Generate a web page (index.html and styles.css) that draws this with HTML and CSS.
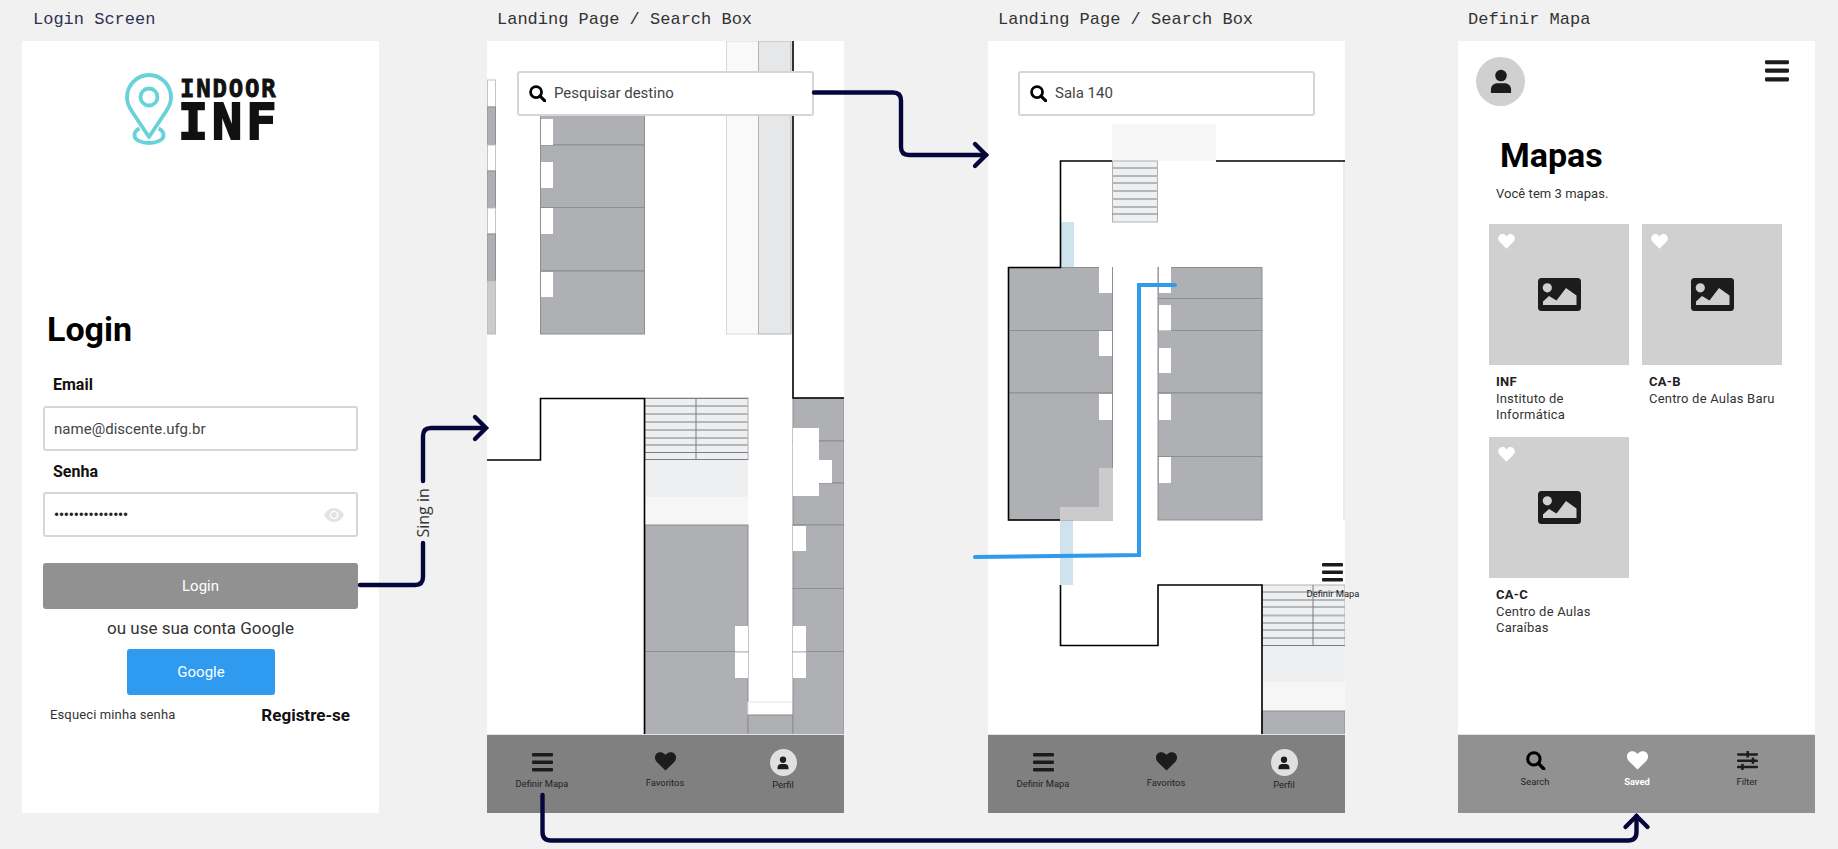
FILE: index.html
```html
<!DOCTYPE html>
<html lang="pt-BR">
<head>
<meta charset="utf-8">
<title>Indoor INF</title>
<link rel="stylesheet" href="styles.css">
</head>
<body>
<svg class="defs" width="0" height="0" aria-hidden="true">
  <symbol id="i-menu" viewBox="0 0 21 19"><rect x="0" y="0" width="21" height="3.6" rx="1"/><rect x="0" y="7.4" width="21" height="3.6" rx="1"/><rect x="0" y="15" width="21" height="3.6" rx="1"/></symbol>
  <symbol id="i-heart" viewBox="0 0 21 19"><path d="M10.5 18.6 2 10.2C-.7 7.4-.6 3.6 1.6 1.6 3.9-.5 7.4-.2 9.3 1.8l1.2 1.3 1.2-1.3c1.9-2 5.4-2.3 7.7-.2 2.2 2 2.3 5.8-.4 8.6z"/></symbol>
  <symbol id="i-person" viewBox="0 0 24 26"><circle cx="12" cy="6.5" r="6.3"/><path d="M1 25.5v-3.6C1 17.6 4.4 15 8 15h8c3.6 0 7 2.6 7 6.9v3.6z"/></symbol>
  <symbol id="i-search" viewBox="0 0 20 20"><circle cx="8.3" cy="8.3" r="6.5" fill="none" stroke="currentColor" stroke-width="3.2"/><path d="M13 13l5.6 5.6" fill="none" stroke="currentColor" stroke-width="3.6" stroke-linecap="round"/></symbol>
  <symbol id="i-image" viewBox="0 0 43 33"><rect width="43" height="33" rx="3.5" fill="#1c1c1c"/><circle cx="9.3" cy="9.8" r="4.6" fill="#d0d0d0"/><path d="M5 27v-3.5l6-5.5 7.5 4.5L28 10l10.500 7.500V27z" fill="#d0d0d0"/></symbol>
  <symbol id="i-filter" viewBox="0 0 20 18"><rect y="2" width="20" height="2.4" rx="1"/><rect x="9" y="0" width="2.400" height="6.200"/><rect y="8" width="20" height="2.400" rx="1"/><rect x="14" y="6.200" width="2.400" height="6"/><rect y="14" width="20" height="2.400" rx="1"/><rect x="4" y="12.200" width="2.400" height="5.800"/></symbol>
</svg>

<main class="board">

  <section class="artboard artboard-login">
    <h2 class="board-title board-title-blue">Login Screen</h2>
    <div class="frame frame-login">
      <div class="logo">
        <svg class="logo-pin" viewBox="0 0 48 72" aria-hidden="true">
          <path d="M24 64 7 38.500C4 34 2 29.500 2 24.500 2 12.200 11.800 2 24 2s22 10.200 22 22.500c0 5-2 9.500-5 14z" fill="none" stroke="#67d3d8" stroke-width="3.800" stroke-linejoin="round"/>
          <circle cx="24" cy="24" r="8.500" fill="none" stroke="#67d3d8" stroke-width="3.800"/>
          <path d="M14.500 55.500C11 57 9.500 59.800 9.500 62.500c0 4.300 6.500 7.500 14.500 7.500s14.500-3.200 14.500-7.500c0-2.700-1.500-5.500-5-7" fill="none" stroke="#67d3d8" stroke-width="3.800"/>
        </svg>
        <div class="logo-words">
          <span class="logo-top">INDOOR</span>
          <span class="logo-bottom">INF</span>
        </div>
      </div>
      <h1 class="login-title">Login</h1>
      <label class="field-label">Email</label>
      <div class="input">name@discente.ufg.br</div>
      <label class="field-label field-label-second">Senha</label>
      <div class="input input-password">
        <span class="dots">•••••••••••••••</span>
        <svg class="eye" viewBox="0 0 20 14" aria-hidden="true"><path d="M10 0C5.500 0 2 3 0 7c2 4 5.500 7 10 7s8-3 10-7c-2-4-5.500-7-10-7z" fill="#e3e3e3"/><circle cx="10" cy="7" r="4.300" fill="#fff"/><circle cx="10" cy="7" r="2.900" fill="#e3e3e3"/></svg>
      </div>
      <div class="btn btn-login">Login</div>
      <p class="or-text">ou use sua conta Google</p>
      <div class="btn btn-google">Google</div>
      <div class="login-links">
        <span class="forgot">Esqueci minha senha</span>
        <span class="register">Registre-se</span>
      </div>
    </div>
  </section>

  <section class="artboard artboard-landing">
    <h2 class="board-title">Landing Page / Search Box</h2>
    <div class="frame frame-map">
      <svg class="map" viewBox="487 41 357 693" aria-hidden="true">
        <rect class="blank" x="487.500" y="80" width="8" height="27"/>
        <rect class="room" x="487" y="107" width="8.500" height="38"/>
        <rect class="blank" x="487.500" y="145" width="8" height="26"/>
        <rect class="room" x="487" y="171" width="8.500" height="37"/>
        <rect class="blank" x="487.500" y="208" width="8" height="26"/>
        <rect class="room" x="487" y="234" width="8.500" height="47"/>
        <rect class="pale" x="487" y="281" width="8.500" height="53"/>

        <rect class="room" x="540.500" y="100" width="104" height="45"/>
        <rect class="room" x="540.500" y="145" width="104" height="62.500"/>
        <rect class="room" x="540.500" y="207.500" width="104" height="63.500"/>
        <rect class="room" x="540.500" y="271" width="104" height="63"/>
        <rect class="notch" x="541" y="119" width="12" height="26"/>
        <rect class="notch" x="541" y="162" width="12" height="26"/>
        <rect class="notch" x="541" y="208" width="12" height="26"/>
        <rect class="notch" x="541" y="272" width="12" height="25"/>

        <rect class="hall-a" x="726.500" y="41" width="32" height="293"/>
        <rect class="hall-b" x="758.500" y="41" width="32.500" height="293"/>

        <rect class="step" x="645" y="398" width="103" height="62"/>
        <path class="step-line" d="M645 406h103M645 414h103M645 422h103M645 430h103M645 438h103M645 445h103"/>
        <path class="step-dark" d="M645 452.500h103M645 459.500h103M696 398v62M645 398.500h103"/>
        <rect class="landing" x="645" y="460" width="103" height="37"/>
        <rect class="landing-lt" x="645" y="497" width="103" height="28"/>
        <rect class="room" x="645" y="525" width="103" height="126.500"/>
        <rect class="room" x="645" y="651.500" width="103" height="83"/>
        <rect class="notch" x="735" y="626" width="13" height="25.500"/>
        <rect class="notch" x="735" y="652.500" width="13" height="25.500"/>
        <rect class="notch-line" x="748" y="702" width="45" height="13"/>
        <rect class="room" x="748" y="715" width="45" height="20"/>

        <rect class="room" x="793" y="398" width="51" height="43"/>
        <rect class="room" x="793" y="441" width="51" height="42"/>
        <rect class="room" x="793" y="483" width="51" height="42"/>
        <rect class="room" x="793" y="525" width="51" height="63.500"/>
        <rect class="room" x="793" y="588.500" width="51" height="63"/>
        <rect class="room" x="793" y="651.500" width="51" height="83"/>
        <rect class="notch" x="793" y="428" width="26" height="68"/>
        <rect class="notch" x="819" y="460" width="13" height="23"/>
        <rect class="notch" x="793" y="526" width="13" height="25"/>
        <rect class="notch" x="793" y="626" width="13" height="25.500"/>
        <rect class="notch" x="793" y="652.500" width="13" height="25.500"/>

        <path class="wall" d="M793 41V398H844M487 460H540.500V398.500H644.500V734"/>
      </svg>
      <div class="search search-overlay">
        <svg class="search-icon"><use href="#i-search"/></svg>
        <span>Pesquisar destino</span>
      </div>
      <nav class="nav nav-dark">
        <div class="nav-item nav-item-menu"><svg class="nav-icon"><use href="#i-menu"/></svg><span>Definir Mapa</span></div>
        <div class="nav-item nav-item-heart"><svg class="nav-icon"><use href="#i-heart"/></svg><span>Favoritos</span></div>
        <div class="nav-item nav-item-avatar"><div class="mini-avatar"><svg class="mini-person"><use href="#i-person"/></svg></div><span>Perfil</span></div>
      </nav>
    </div>
  </section>

  <section class="artboard artboard-route">
    <h2 class="board-title">Landing Page / Search Box</h2>
    <div class="frame frame-map">
      <svg class="map" viewBox="988 41 357 693" aria-hidden="true">
        <rect class="landing-lt" x="1112" y="124" width="104" height="37"/>
        <rect class="step" x="1112.500" y="161" width="45" height="61"/>
        <path class="step-line" d="M1112 168h46M1112 176h46M1112 183h46M1112 191h46M1112 199h46M1112 207h46"/>
        <path class="step-dark" d="M1112 214h46"/>
        <rect class="water" x="1061" y="222" width="13" height="45"/>
        <rect class="water" x="1060" y="520" width="13" height="65"/>

        <rect class="room" x="1008.500" y="267.500" width="104" height="63"/>
        <rect class="room" x="1008.500" y="330.500" width="104" height="62.500"/>
        <rect class="room" x="1008.500" y="393" width="104" height="127"/>
        <rect class="notch" x="1099" y="267" width="13" height="26"/>
        <rect class="notch" x="1099" y="331" width="13" height="25"/>
        <rect class="notch" x="1099" y="394" width="13" height="26"/>
        <path class="pale-flat" d="M1099 468h14v52h-53v-13h39z"/>

        <rect class="room" x="1158" y="267.500" width="104" height="31"/>
        <rect class="room" x="1158" y="298.500" width="104" height="32"/>
        <rect class="room" x="1158" y="330.500" width="104" height="62.500"/>
        <rect class="room" x="1158" y="393" width="104" height="63.500"/>
        <rect class="room" x="1158" y="456.500" width="104" height="63.500"/>
        <rect class="notch" x="1159" y="267" width="12" height="26"/>
        <rect class="notch" x="1159" y="305" width="12" height="25.500"/>
        <rect class="notch" x="1159" y="348" width="12" height="25"/>
        <rect class="notch" x="1159" y="394" width="12" height="26"/>
        <rect class="notch" x="1159" y="457" width="12" height="26"/>

        <rect class="step" x="1262" y="585" width="83" height="61"/>
        <path class="step-line" d="M1262 592h83M1262 600h83M1262 607h83M1262 615.500h83M1262 623h83M1262 630h83"/>
        <path class="step-dark" d="M1262 638h83M1262 645.500h83M1313 585v61"/>
        <rect class="landing" x="1262" y="646" width="83" height="36"/>
        <rect class="landing-lt" x="1262" y="682" width="83" height="29"/>
        <rect class="room" x="1262" y="711" width="83" height="24"/>

        <path class="side-line" d="M1344 161V520"/>
        <path class="wall" d="M1216 161H1345M1112 161H1060.500V267.500H1008.500V520H1060M1060.500 585V645.500H1158V585H1262V734"/>
      </svg>
      <div class="search search-overlay">
        <svg class="search-icon"><use href="#i-search"/></svg>
        <span>Sala 140</span>
      </div>
      <svg class="route" viewBox="960 240 240 330" aria-hidden="true">
        <path d="M1175 285H1139V555L975 557" fill="none" stroke="#2f9bec" stroke-width="4" stroke-linecap="round"/>
      </svg>
      <div class="floating-menu">
        <svg class="nav-icon"><use href="#i-menu"/></svg>
        <span>Definir Mapa</span>
      </div>
      <nav class="nav nav-dark">
        <div class="nav-item nav-item-menu"><svg class="nav-icon"><use href="#i-menu"/></svg><span>Definir Mapa</span></div>
        <div class="nav-item nav-item-heart"><svg class="nav-icon"><use href="#i-heart"/></svg><span>Favoritos</span></div>
        <div class="nav-item nav-item-avatar"><div class="mini-avatar"><svg class="mini-person"><use href="#i-person"/></svg></div><span>Perfil</span></div>
      </nav>
    </div>
  </section>

  <section class="artboard artboard-maps">
    <h2 class="board-title">Definir Mapa</h2>
    <div class="frame frame-maps">
      <div class="maps-body">
        <header class="maps-top">
          <div class="avatar"><svg class="avatar-person"><use href="#i-person"/></svg></div>
          <svg class="top-menu"><use href="#i-menu"/></svg>
        </header>
        <h1 class="maps-title">Mapas</h1>
        <p class="maps-sub">Você tem 3 mapas.</p>
        <div class="cards">
          <article class="card">
            <div class="thumb"><svg class="thumb-heart"><use href="#i-heart"/></svg><svg class="thumb-image"><use href="#i-image"/></svg></div>
            <h3 class="card-name">INF</h3>
            <p class="card-desc">Instituto de Informática</p>
          </article>
          <article class="card">
            <div class="thumb"><svg class="thumb-heart"><use href="#i-heart"/></svg><svg class="thumb-image"><use href="#i-image"/></svg></div>
            <h3 class="card-name">CA-B</h3>
            <p class="card-desc">Centro de Aulas Baru</p>
          </article>
          <article class="card">
            <div class="thumb"><svg class="thumb-heart"><use href="#i-heart"/></svg><svg class="thumb-image"><use href="#i-image"/></svg></div>
            <h3 class="card-name">CA-C</h3>
            <p class="card-desc">Centro de Aulas Caraíbas</p>
          </article>
        </div>
      </div>
      <nav class="nav nav-light">
        <div class="nav-item nav-item-tab"><svg class="nav-icon tab-search"><use href="#i-search"/></svg><span>Search</span></div>
        <div class="nav-item nav-item-tab nav-item-active"><svg class="nav-icon"><use href="#i-heart"/></svg><span>Saved</span></div>
        <div class="nav-item nav-item-tab"><svg class="nav-icon"><use href="#i-filter"/></svg><span>Filter</span></div>
      </nav>
    </div>
  </section>

</main>

<svg class="arrows" viewBox="0 0 1838 849" aria-hidden="false">
  <path class="arrow" d="M360 585H415Q423 585 423 577V543M423 481V436Q423 428 431 428H485"/>
  <path class="arrow" d="M475 417L486 428L475 439"/>
  <text class="arrow-label" transform="translate(428.500 537.500) rotate(-90)">Sing in</text>
  <path class="arrow" d="M814 92.500H893Q901 92.500 901 100.500V147Q901 155 909 155H986"/>
  <path class="arrow" d="M975 144L986 155L975 166"/>
  <path class="arrow" d="M542.500 795V832Q542.500 840.500 551 840.500H1628Q1636.500 840.500 1636.500 832V816"/>
  <path class="arrow" d="M1625.500 827L1636.500 816L1647.500 827"/>
</svg>
</body>
</html>
```

FILE: styles.css
```css
* { box-sizing: border-box; }
html, body { margin: 0; padding: 0; }
body {
  width: 1838px;
  height: 849px;
  overflow: hidden;
  position: relative;
  background: #f1f1f2;
  font-family: Roboto, "Liberation Sans", sans-serif;
  color: #222;
}
.defs { position: absolute; }

.board { display: flex; align-items: flex-start; }
.artboard { width: 357px; flex: none; }
.artboard-login { margin-left: 22px; }
.artboard-landing { margin-left: 108px; }
.artboard-route { margin-left: 144px; }
.artboard-maps { margin-left: 113px; }

.board-title {
  margin: 0;
  height: 41px;
  padding: 10px 0 0 10px;
  font: 400 17px/20px "Liberation Mono", "DejaVu Sans Mono", monospace;
  color: #333;
  white-space: nowrap;
}
.board-title-blue { color: #2f2f52; padding-left: 11px; }

.frame { position: relative; width: 357px; height: 772px; background: #fff; }

/* login */
.frame-login { padding: 32px 21px 0; }
.logo { display: flex; gap: 8px; margin-left: 82px; height: 72px; }
.logo-pin { width: 48px; height: 72px; flex: none; }
.logo-words { display: flex; flex-direction: column; font-family: "DejaVu Sans Mono", monospace; font-weight: 700; color: #111; }
.logo-top { font-size: 24px; line-height: 20px; letter-spacing: 1.8px; margin: 6px 0 0 -1px; -webkit-text-stroke: .8px #111; }
.logo-bottom { font-size: 50px; line-height: 40px; letter-spacing: 4px; margin: 3px 0 0 -3px; -webkit-text-stroke: 2px #111; }
.login-title { margin: 164px 0 0 4px; font-weight: 700; font-size: 34px; line-height: 40px; color: #000; }
.field-label { display: block; margin: 26px 0 11px 10px; font-weight: 700; font-size: 16px; line-height: 20px; color: #111; }
.field-label-second { margin-top: 11px; margin-bottom: 10px; }
.input {
  display: flex;
  align-items: center;
  justify-content: space-between;
  width: 315px;
  height: 45px;
  padding: 0 9px;
  border: 2px solid #d6d6d6;
  border-radius: 3px;
  font-size: 15px;
  letter-spacing: .03px;
  color: #444;
}
.dots { font-size: 14px; font-weight: 700; letter-spacing: -.1px; color: #222; }
.eye { width: 20px; height: 14px; margin-right: 3px; }
.btn { display: flex; align-items: center; justify-content: center; border-radius: 3px; color: #fff; font-size: 15px; }
.btn-login { width: 315px; height: 46px; margin-top: 26px; background: #919191; }
.or-text { margin: 8px 0 0; width: 315px; text-align: center; font-size: 17px; line-height: 22px; color: #333; }
.btn-google { width: 148px; height: 46px; margin: 10px 0 0 84px; background: #2e9af0; }
.login-links { display: flex; justify-content: space-between; align-items: center; width: 300px; margin: 10px 0 0 7px; line-height: 20px; }
.forgot { font-size: 13px; letter-spacing: .13px; color: #333; }
.register { font-weight: 700; font-size: 17px; color: #111; }

/* map frames */
.frame-map { display: flex; flex-direction: column; }
.map { display: block; width: 357px; height: 693px; flex: none; }
.search {
  display: flex;
  align-items: center;
  gap: 8px;
  height: 45px;
  width: 297px;
  padding: 0 10px 1px;
  background: #fff;
  border: 2px solid #d6d6d6;
  border-radius: 3px;
  font-size: 15px;
  color: #444;
}
.search-overlay { position: absolute; left: 30px; top: 30px; }
.search-icon { width: 17px; height: 17px; color: #000; flex: none; }

.route { position: absolute; left: -28px; top: 199px; width: 240px; height: 330px; }
.floating-menu {
  position: absolute;
  left: 318px;
  top: 522px;
  width: 54px;
  display: flex;
  flex-direction: column;
  align-items: center;
  font-size: 9.4px;
  line-height: 12px;
  color: #222;
  white-space: nowrap;
}
.floating-menu .nav-icon { margin: 0 0 6px 0; position: relative; left: -1px; }

.nav { display: grid; flex: none; height: 79px; border-top: 1px solid #e2e2e2; }
.nav-dark { grid-template-columns: 110px 136px 100px; background: #808080; }
.nav-light { grid-template-columns: 100px 104px 116px; padding-left: 27px; background: #919191; }
.nav-item { display: flex; flex-direction: column; align-items: center; font-size: 9.4px; line-height: 12px; color: #222; white-space: nowrap; }
.nav-icon { width: 21px; height: 19px; fill: #1c1c1c; color: #000; flex: none; }
.nav-item-menu { padding-top: 18px; }
.nav-item-menu span { margin-top: 6px; }
.nav-item-heart { padding-top: 17px; }
.nav-item-heart span { margin-top: 6px; }
.nav-item-avatar { padding-top: 14px; }
.nav-item-avatar span { margin-top: 3px; }
.mini-avatar { display: flex; align-items: center; justify-content: center; width: 27px; height: 27px; border-radius: 50%; background: #e0e0e0; }
.mini-person { width: 12px; height: 14px; fill: #1c1c1c; }
.nav-item-tab { padding-top: 16px; }
.nav-item-tab span { margin-top: 6px; }
.nav-item-active { color: #fff; font-weight: 700; }
.nav-item-active .nav-icon { fill: #fff; }

/* svg map pieces */
.room { fill: #afb0b3; stroke: #8d8e91; stroke-width: 1; }
.blank { fill: #fff; stroke: #c4c4c4; stroke-width: 1; }
.pale { fill: #cbcbcb; stroke: #bbb; stroke-width: 1; }
.pale-flat { fill: #cbcbcb; }
.notch { fill: #fff; }
.notch-line { fill: #fff; stroke: #e6e6e6; stroke-width: 1; }
.hall-a { fill: #f9f9f9; stroke: #d8d8d8; stroke-width: 1; }
.hall-b { fill: #e6e7e8; stroke: #b4b4b4; stroke-width: 1; }
.step { fill: #eeeff0; stroke: #b0b0b0; stroke-width: 1; }
.step-line { fill: none; stroke: #b5b6b8; stroke-width: 2; }
.step-dark { fill: none; stroke: #7c7d80; stroke-width: 1; }
.landing { fill: #eeeff0; }
.landing-lt { fill: #f6f6f6; }
.water { fill: #cfe3ec; }
.side-line { fill: none; stroke: #e4e4e4; stroke-width: 1.5; }
.wall { fill: none; stroke: #000; stroke-width: 1.6; }

/* maps screen */
.frame-maps { display: flex; flex-direction: column; }
.maps-body { flex: 1; min-height: 0; padding: 16px 0 0 31px; }
.maps-top { display: flex; justify-content: space-between; align-items: flex-start; width: 276px; margin-left: -13px; }
.avatar { display: flex; align-items: center; justify-content: center; width: 49px; height: 49px; border-radius: 50%; background: #d0d0d0; }
.avatar-person { width: 22px; height: 25px; fill: #1c1c1c; }
.top-menu { width: 24px; height: 22px; margin-top: 3px; margin-right: -37px; fill: #1c1c1c; flex: none; }
.maps-title { margin: 28px 0 0 11px; font-weight: 700; font-size: 34px; line-height: 42px; color: #000; }
.maps-sub { margin: 10px 0 0 7px; font-size: 13px; letter-spacing: .05px; line-height: 16px; color: #333; }
.cards { display: grid; grid-template-columns: 140px 140px; column-gap: 13px; margin-top: 22px; }
.card { height: 213px; }
.thumb { position: relative; display: flex; align-items: center; justify-content: center; width: 140px; height: 141px; background: #d0d0d0; }
.thumb-heart { position: absolute; left: 9px; top: 10px; width: 17px; height: 15px; fill: #fff; }
.thumb-image { width: 43px; height: 33px; }
.card-name { margin: 9px 0 0 7px; font-weight: 700; font-size: 13px; line-height: 16px; letter-spacing: .3px; color: #222; }
.card-desc { margin: 1px 0 0 7px; width: 115px; font-size: 13px; line-height: 16px; letter-spacing: .2px; color: #333; }
.card:nth-child(2) .card-desc { width: 130px; }

/* connectors */
.arrows { position: absolute; left: 0; top: 0; width: 1838px; height: 849px; pointer-events: none; }
.arrow { fill: none; stroke: #06063b; stroke-width: 4.400; stroke-linecap: round; stroke-linejoin: miter; }
.arrow-label { font-family: "Open Sans", sans-serif; font-size: 16px; fill: #333; }
```
